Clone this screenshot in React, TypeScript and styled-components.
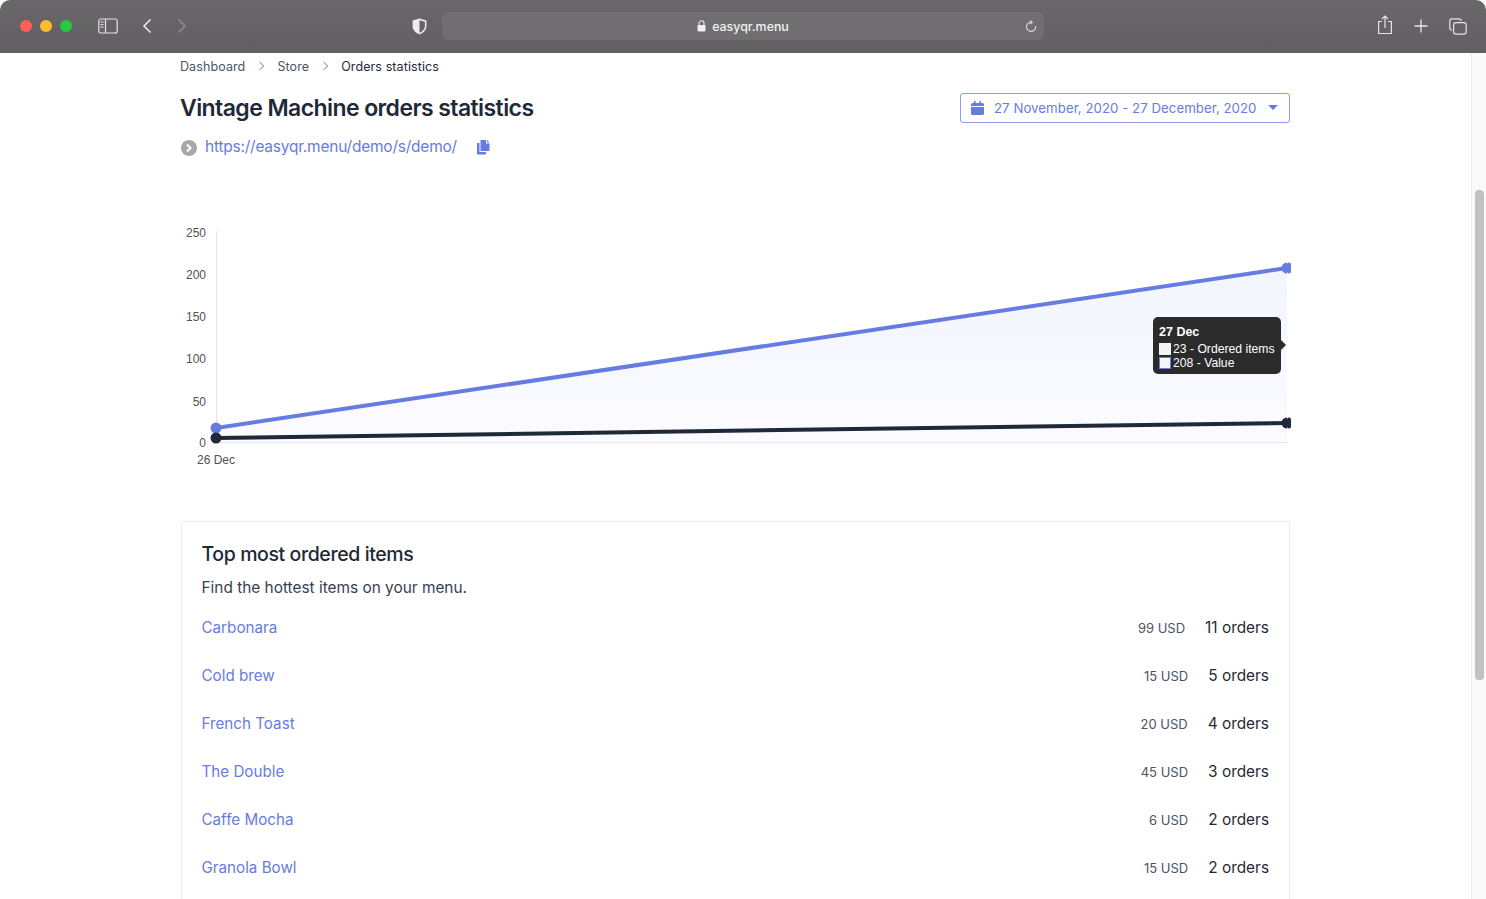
import styled, { createGlobalStyle } from "styled-components";

const GlobalStyle = createGlobalStyle`
  html, body {
    margin: 0;
    height: 100%;
    overflow: hidden;
    background: #ffffff;
  }
  * {
    box-sizing: border-box;
  }
`;

const items = [
  { name: "Carbonara", price: "99 USD", orders: "11 orders" },
  { name: "Cold brew", price: "15 USD", orders: "5 orders" },
  { name: "French Toast", price: "20 USD", orders: "4 orders" },
  { name: "The Double", price: "45 USD", orders: "3 orders" },
  { name: "Caffe Mocha", price: "6 USD", orders: "2 orders" },
  { name: "Granola Bowl", price: "15 USD", orders: "2 orders" },
];

const SafariBar = () => (
  <Toolbar>
    <Lights>
      <Light color="#ff5f57" />
      <Light color="#febc2e" />
      <Light color="#28c840" />
    </Lights>
    <ToolIcon width="20" height="16" viewBox="0 0 20 16" fill="none" stroke="#e4e4e5" strokeWidth="1.2">
      <rect x="0.8" y="1" width="18.4" height="14" rx="2" />
      <path d="M7.5 1v14" />
      <path d="M2.5 4h3M2.5 6.5h3M2.5 9h3" strokeWidth="1" />
    </ToolIcon>
    <NavIcon $gap={24} width="10" height="16" viewBox="0 0 10 16" fill="none" stroke="#e8e8e9" strokeWidth="1.6">
      <path d="M8.5 1.500 2 8l6.500 6.500" />
    </NavIcon>
    <NavIcon $gap={25} width="10" height="16" viewBox="0 0 10 16" fill="none" stroke="#8b8a8d" strokeWidth="1.6">
      <path d="M1.500 1.500 8 8l-6.500 6.500" />
    </NavIcon>
    <ShieldIcon width="15" height="17" viewBox="0 0 15 17">
      <path d="M7.5.6 14.4 2.6v5.6c0 3.8-3.1 6.6-6.9 8.2C3.7 14.8.6 12 .6 8.2V2.6z" fill="#ececed" />
      <path d="M7.5 2.3 12.9 3.8v4.4c0 2.9-2.4 5.2-5.4 6.6z" fill="#636164" />
    </ShieldIcon>
    <AddressBar>
      <LockIcon width="9" height="12" viewBox="0 0 9 12">
        <path d="M2 5V3.3a2.5 2.5 0 0 1 5 0V5" fill="none" stroke="#eeeeee" strokeWidth="1.1" />
        <rect x="0.5" y="5" width="8" height="6.5" rx="1.2" fill="#eeeeee" />
      </LockIcon>
      <AddressText>easyqr.menu</AddressText>
      <ReloadIcon width="12" height="13" viewBox="0 0 12 13" fill="none" stroke="#dcdcdd" strokeWidth="1.1">
        <path d="M6.5 2.2A4.6 4.6 0 1 0 10.6 6" />
        <path d="M5.2.5 7.2 2.2 5.2 4" />
      </ReloadIcon>
    </AddressBar>
    <RightTools>
      <ShareIcon width="16" height="20" viewBox="0 0 16 20" fill="none" stroke="#e4e4e5" strokeWidth="1.2">
        <path d="M5 6.5H1.6v12h12.8v-12H11" />
        <path d="M8 13V1.2M5 4l3-3 3 3" />
      </ShareIcon>
      <ToolIcon width="14" height="14" viewBox="0 0 14 14" fill="none" stroke="#e8e8e9" strokeWidth="1.3">
        <path d="M7 .5v13M.5 7h13" />
      </ToolIcon>
      <ToolIcon width="18" height="17" viewBox="0 0 18 17" fill="none" stroke="#e4e4e5" strokeWidth="1.2">
        <rect x="4.6" y="4.6" width="12.6" height="11.6" rx="2.4" />
        <path d="M3 12.2A2.2 2.2 0 0 1 .8 10V3A2.2 2.2 0 0 1 3 .8h7A2.2 2.2 0 0 1 12.2 3" />
      </ToolIcon>
    </RightTools>
  </Toolbar>
);

const OrdersChart = () => (
  <ChartSvg width="1120" height="260" viewBox="0 0 1120 260">
    <defs>
      <linearGradient id="area" x1="0" y1="0" x2="0" y2="1">
        <stop offset="0" stopColor="#f3f5fe" />
        <stop offset="1" stopColor="#fbfbff" />
      </linearGradient>
    </defs>
    <g fontFamily="'Liberation Sans', Arial, sans-serif" fontSize="12" fill="#525252" textAnchor="end">
      <text x="26" y="30">250</text>
      <text x="26" y="72">200</text>
      <text x="26" y="114">150</text>
      <text x="26" y="156">100</text>
      <text x="26" y="199">50</text>
      <text x="26" y="240">0</text>
      <text x="36" y="257" textAnchor="middle">26 Dec</text>
    </g>
    <path d="M36 221 1107 61V235H36z" fill="url(#area)" />
    <path d="M36.5 24v211M36 235.5h1071" stroke="#e5e5e7" strokeWidth="1" fill="none" />
    <path d="M36 221 1107 61" stroke="#667ce2" strokeWidth="4" fill="none" />
    <path d="M36 231 1107 216" stroke="#1f2937" strokeWidth="4" fill="none" />
    <circle cx="36" cy="221" r="5.5" fill="#667ce2" />
    <circle cx="36" cy="231" r="5.5" fill="#1f2937" />
    <path d="M1107 55.5a5.5 5.5 0 0 0 0 11z" fill="#667ce2" />
    <rect x="1107" y="55.5" width="4" height="11" rx="2" fill="#667ce2" />
    <path d="M1107 210.5a5.5 5.5 0 0 0 0 11z" fill="#1f2937" />
    <rect x="1107" y="210.5" width="4" height="11" rx="2" fill="#1f2937" />
  </ChartSvg>
);

export default function App() {
  return (
    <Frame>
      <GlobalStyle />
      <SafariBar />
      <Viewport>
        <Page>
          <Crumbs>
            <Crumb>Dashboard</Crumb>
            <CrumbArrow />
            <Crumb>Store</Crumb>
            <CrumbArrow />
            <Crumb $current>Orders statistics</Crumb>
          </Crumbs>
          <HeaderRow>
            <Title>Vintage Machine orders statistics</Title>
            <DateButton>
              <CalendarIcon width="13" height="14" viewBox="0 0 13 14" fill="#667ce2">
                <path d="M3 0h1.600v2H8.400V0H10v2h1.500A1.500 1.500 0 0 1 13 3.500V5H0V3.500A1.500 1.500 0 0 1 1.500 2H3zM0 6h13v6.500a1.500 1.500 0 0 1-1.500 1.500h-10A1.500 1.500 0 0 1 0 12.500z" />
              </CalendarIcon>
              <DateText>27 November, 2020 - 27 December, 2020</DateText>
              <Caret />
            </DateButton>
          </HeaderRow>
          <LinkRow>
            <GoBadge>
              <svg width="8" height="10" viewBox="0 0 8 10" fill="none" stroke="#ffffff" strokeWidth="2">
                <path d="M2 1.500 5.500 5 2 8.500" />
              </svg>
            </GoBadge>
            <StoreLink>https://easyqr.menu/demo/s/demo/</StoreLink>
            <CopyIcon width="13" height="15" viewBox="0 0 13 15" fill="#667ce2">
              <path d="M3.500 0H9v3.500h3.500V11h-9z" />
              <path d="M10 0l2.500 2.500H10zM0 3h2.500v9H9v2.500H0z" />
            </CopyIcon>
          </LinkRow>
          <ChartArea>
            <OrdersChart />
            <ChartTip>
              <TipTitle>27 Dec</TipTitle>
              <TipRow>
                <TipSwatch $border="#f3f4f6" $fill="#f3f4f6" />
                23 - Ordered items
              </TipRow>
              <TipRow>
                <TipSwatch $border="#667ce2" $fill="#f5f7ff" />
                208 - Value
              </TipRow>
            </ChartTip>
          </ChartArea>
          <Card>
            <CardTitle>Top most ordered items</CardTitle>
            <CardSub>Find the hottest items on your menu.</CardSub>
            <ItemList>
              {items.map((item) => (
                <ItemRow key={item.name}>
                  <ItemName>{item.name}</ItemName>
                  <ItemPrice>{item.price}</ItemPrice>
                  <ItemOrders>{item.orders}</ItemOrders>
                </ItemRow>
              ))}
            </ItemList>
          </Card>
        </Page>
        <ScrollTrack>
          <ScrollThumb />
        </ScrollTrack>
      </Viewport>
    </Frame>
  );
}

const Frame = styled.div`
  width: 1486px;
  height: 899px;
  display: flex;
  flex-direction: column;
  overflow: hidden;
  background: #ffffff;
  font-family: Inter, "Liberation Sans", sans-serif;
  color: #1f2937;
`;

const Toolbar = styled.header`
  height: 53px;
  flex: none;
  display: flex;
  align-items: center;
  padding: 0 19px 1px 20px;
  background: linear-gradient(#69676a, #615f62);
  border-radius: 10px 10px 0 0;
`;

const Lights = styled.div`
  display: flex;
  gap: 8px;
  margin-right: 26px;
`;

const Light = styled.span<{ color: string }>`
  width: 12px;
  height: 12px;
  border-radius: 50%;
  background: ${(props) => props.color};
`;

const ToolIcon = styled.svg`
  flex: none;
`;

const ShareIcon = styled.svg`
  flex: none;
  margin-bottom: 2px;
`;

const NavIcon = styled.svg<{ $gap: number }>`
  flex: none;
  margin-left: ${(props) => props.$gap}px;
`;

const ShieldIcon = styled.svg`
  flex: none;
  margin-left: 225px;
`;

const AddressBar = styled.div`
  position: relative;
  width: 602px;
  height: 28px;
  margin-left: 15px;
  display: flex;
  align-items: center;
  justify-content: center;
  gap: 6px;
  background: #706e71;
  border-radius: 6px;
`;

const LockIcon = styled.svg`
  flex: none;
`;

const AddressText = styled.span`
  font-size: 12.4px;
  font-weight: 500;
  color: #f2f2f2;
`;

const ReloadIcon = styled.svg`
  position: absolute;
  right: 7px;
  top: 8px;
`;

const RightTools = styled.div`
  margin-left: auto;
  display: flex;
  align-items: center;
  gap: 21px;
`;

const Viewport = styled.div`
  flex: 1;
  min-height: 0;
  display: flex;
`;

const Page = styled.main`
  flex: 1;
  min-width: 0;
  padding: 0 181px 0 180px;
`;

const Crumbs = styled.nav`
  height: 28px;
  padding-bottom: 1px;
  display: flex;
  align-items: center;
  font-size: 12.5px;
  letter-spacing: 0.1px;
`;

const Crumb = styled.span<{ $current?: boolean }>`
  color: ${(props) => (props.$current ? "#1f2937" : "#4b5563")};
`;

const CrumbArrow = styled.span`
  width: 6px;
  height: 6px;
  margin: 0 14px 2px 12px;
  border-top: 1.5px solid #9ca3af;
  border-right: 1.5px solid #9ca3af;
  transform: rotate(45deg);
`;

const HeaderRow = styled.div`
  height: 31px;
  margin-top: 12px;
  display: flex;
  align-items: center;
  justify-content: space-between;
`;

const Title = styled.h1`
  margin: 0;
  padding-bottom: 1px;
  font-size: 23px;
  font-weight: 600;
  letter-spacing: -0.58px;
  color: #1f2937;
`;

const DateButton = styled.div`
  width: 330px;
  height: 30px;
  align-self: flex-start;
  display: flex;
  align-items: center;
  padding: 0 11px 0 10px;
  background: #ffffff;
  border: 1px solid #8b9cea;
  border-radius: 3px;
`;

const CalendarIcon = styled.svg`
  flex: none;
`;

const DateText = styled.span`
  margin-left: 10px;
  font-size: 13.25px;
  letter-spacing: 0.03px;
  color: #667ce2;
  white-space: nowrap;
`;

const Caret = styled.span`
  margin: 0 0 2px auto;
  width: 0;
  height: 0;
  border-left: 5px solid transparent;
  border-right: 5px solid transparent;
  border-top: 5px solid #667ce2;
`;

const LinkRow = styled.div`
  height: 24px;
  margin-top: 10px;
  display: flex;
  align-items: center;
`;

const GoBadge = styled.span`
  width: 16px;
  height: 16px;
  margin: 3px 0 0 1px;
  display: flex;
  align-items: center;
  justify-content: center;
  border-radius: 50%;
  background: #a8a8a8;
`;

const StoreLink = styled.a`
  margin-left: 8px;
  font-size: 15.5px;
  letter-spacing: -0.23px;
  color: #667ce2;
`;

const CopyIcon = styled.svg`
  margin: 3px 0 0 20px;
`;

const ChartArea = styled.div`
  position: relative;
  height: 363px;
  padding-top: 49px;
`;

const ChartSvg = styled.svg`
  display: block;
  overflow: visible;
`;

const ChartTip = styled.div`
  position: absolute;
  left: 973px;
  top: 159px;
  width: 128px;
  height: 57px;
  padding: 8px 6px 0;
  border-radius: 5px;
  background: #2b2b2b;
  color: #ffffff;
  font-family: "Liberation Sans", Arial, sans-serif;
  font-size: 12.2px;
  line-height: 14px;

  &::after {
    content: "";
    position: absolute;
    right: -5px;
    top: 23px;
    border-top: 5px solid transparent;
    border-bottom: 5px solid transparent;
    border-left: 5px solid #2b2b2b;
  }
`;

const TipTitle = styled.div`
  font-weight: 700;
  font-size: 12.5px;
  margin-bottom: 3px;
`;

const TipRow = styled.div`
  display: flex;
  align-items: center;
  gap: 2px;
  white-space: nowrap;
`;

const TipSwatch = styled.span<{ $border: string; $fill: string }>`
  width: 12px;
  height: 12px;
  flex: none;
  background: ${(props) => props.$fill};
  border: 1px solid ${(props) => props.$border};
`;

const Card = styled.section`
  height: 480px;
  margin-left: 1px;
  padding: 20px 20px 0 19.5px;
  border: 1px solid #e9edf3;
  border-radius: 3px;
`;

const CardTitle = styled.h2`
  margin: 0;
  font-size: 19.5px;
  line-height: 24px;
  font-weight: 500;
  letter-spacing: -0.4px;
  color: #1f2937;
`;

const CardSub = styled.p`
  margin: 10px 0 0;
  font-size: 15.4px;
  line-height: 24px;
  color: #374151;
`;

const ItemList = styled.ul`
  margin: 7px 0 0;
  padding: 0;
  list-style: none;
`;

const ItemRow = styled.li`
  height: 48px;
  display: flex;
  align-items: center;
  padding-bottom: 8px;
`;

const ItemName = styled.a`
  margin-right: auto;
  font-size: 15.2px;
  color: #667ce2;
`;

const ItemPrice = styled.span`
  margin-top: 2px;
  font-size: 13px;
  color: #4b5563;
`;

const ItemOrders = styled.span`
  margin-left: 20px;
  font-size: 15.4px;
  color: #1f2937;
`;

const ScrollTrack = styled.aside`
  width: 15px;
  flex: none;
  padding: 137px 2px 0 3px;
  background: #fafafa;
  border-left: 1px solid #ececec;
`;

const ScrollThumb = styled.div`
  height: 490px;
  border-radius: 4px;
  background: #c1c1c1;
`;
